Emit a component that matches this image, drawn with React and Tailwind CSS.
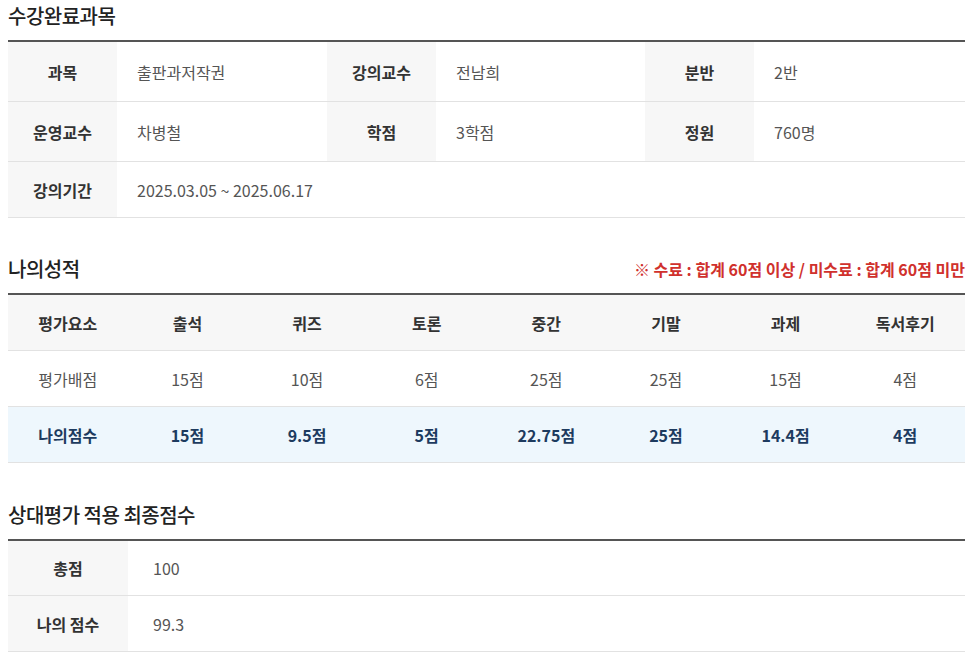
import React from "react";

/* ---------- DATA ---------- */

const courseRows = [
   [
      ["과목", "출판과저작권"],
      ["강의교수", "전남희"],
      ["분반", "2반"],
   ],
   [
      ["운영교수", "차병철"],
      ["학점", "3학점"],
      ["정원", "760명"],
   ],
];

const gradeHead = ["평가요소", "출석", "퀴즈", "토론", "중간", "기말", "과제", "독서후기"];
const gradeMax = ["평가배점", "15점", "10점", "6점", "25점", "25점", "15점", "4점"];
const gradeMine = ["나의점수", "15점", "9.5점", "5점", "22.75점", "25점", "14.4점", "4점"];

/* ---------- UI ---------- */

function SectionTitle({ children, right }) {
   return (
      <div className="h-[40px] pb-[8px] flex items-center justify-between">
         <h2 className="text-[20px] font-medium text-[#222] tracking-[-0.5px]">{children}</h2>
         {right}
      </div>
   );
}

function Label({ children, className = "" }) {
   return (
      <div
         className={`bg-[#f7f7f7] flex items-center justify-center font-bold text-[16px] text-[#333] ${className}`}
      >
         {children}
      </div>
   );
}

function Value({ children, className = "" }) {
   return (
      <div className={`flex items-center pl-[20px] text-[16px] text-[#555] ${className}`}>
         {children}
      </div>
   );
}

export default function App() {
   return (
      <div
         className="min-h-screen bg-white pl-2 pt-0"
         style={{ fontFamily: '"Noto Sans CJK KR", "Noto Sans", sans-serif' }}
      >
         <div className="w-[957px]">
            {/* 수강완료과목 */}
            <SectionTitle>수강완료과목</SectionTitle>
            <div className="border-t-2 border-[#555]">
               {courseRows.map((row, i) => (
                  <div
                     key={i}
                     className="grid grid-cols-[109px_210px_109px_209px_109px_1fr] h-[60px] border-b border-[#e2e2e2]"
                  >
                     {row.map(([k, v]) => (
                        <React.Fragment key={k}>
                           <Label>{k}</Label>
                           <Value>{v}</Value>
                        </React.Fragment>
                     ))}
                  </div>
               ))}
               <div className="grid grid-cols-[109px_1fr] h-[56px] border-b border-[#e2e2e2]">
                  <Label>강의기간</Label>
                  <Value>2025.03.05 ~ 2025.06.17</Value>
               </div>
            </div>

            {/* 나의성적 */}
            <div className="mt-[35px]">
               <SectionTitle
                  right={
                     <span className="text-[16px] font-bold text-[#d0312d]">
                        ※ 수료 : 합계 60점 이상 / 미수료 : 합계 60점 미만
                     </span>
                  }
               >
                  나의성적
               </SectionTitle>
               <div className="border-t-2 border-[#555] text-[16px]">
                  <div className="grid grid-cols-8 h-[56px] bg-[#f7f7f7] border-b border-[#e2e2e2]">
                     {gradeHead.map((t) => (
                        <div key={t} className="flex items-center justify-center font-bold text-[#333]">
                           {t}
                        </div>
                     ))}
                  </div>
                  <div className="grid grid-cols-8 h-[56px] border-b border-[#e2e2e2]">
                     {gradeMax.map((t, i) => (
                        <div key={i} className="flex items-center justify-center text-[#555]">
                           {t}
                        </div>
                     ))}
                  </div>
                  <div className="grid grid-cols-8 h-[56px] bg-[#eef7fd] border-b border-[#e2e2e2]">
                     {gradeMine.map((t, i) => (
                        <div key={i} className="flex items-center justify-center font-bold text-[#1d3b5f]">
                           {t}
                        </div>
                     ))}
                  </div>
               </div>
            </div>

            {/* 상대평가 적용 최종점수 */}
            <div className="mt-[36px]">
               <SectionTitle>상대평가 적용 최종점수</SectionTitle>
               <div className="border-t-2 border-[#555]">
                  <div className="grid grid-cols-[120px_1fr] h-[55px] border-b border-[#e2e2e2]">
                     <Label>총점</Label>
                     <Value className="pl-[25px]">100</Value>
                  </div>
                  <div className="grid grid-cols-[120px_1fr] h-[56px] border-b border-[#e2e2e2]">
                     <Label>나의 점수</Label>
                     <Value className="pl-[25px]">99.3</Value>
                  </div>
               </div>
            </div>
         </div>
      </div>
   );
}
